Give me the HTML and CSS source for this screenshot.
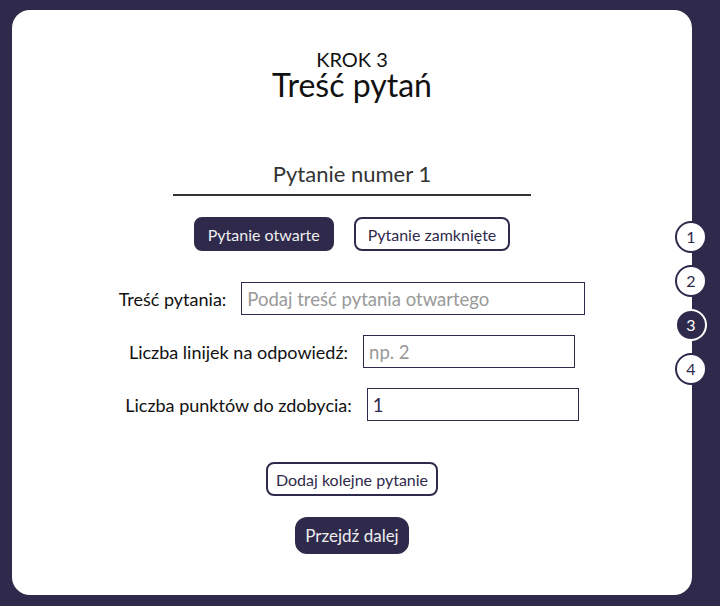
FILE: index.html
```html
<!DOCTYPE html>
<html lang="pl">
<head>
    <meta charset="UTF-8">
    <meta name="viewport" content="width=device-width, initial-scale=1.0">
    <title>Krok 3 - Treść pytań</title>
    <link rel="stylesheet" href="styles.css">
</head>
<body>
    <div class="card">
        <div class="card-header">
            <p class="step-label">KROK 3</p>
            <h1 class="title">Treść pytań</h1>
        </div>

        <input class="question-name" type="text" value="Pytanie numer 1">

        <div class="type-buttons">
            <button class="btn btn-filled">Pytanie otwarte</button>
            <button class="btn btn-outline">Pytanie zamknięte</button>
        </div>

        <div class="form">
            <div class="form-row">
                <label for="content">Treść pytania:</label>
                <input class="field field-wide" id="content" type="text" placeholder="Podaj treść pytania otwartego">
            </div>
            <div class="form-row">
                <label for="lines">Liczba linijek na odpowiedź:</label>
                <input class="field" id="lines" type="text" placeholder="np. 2">
            </div>
            <div class="form-row">
                <label for="points">Liczba punktów do zdobycia:</label>
                <input class="field" id="points" type="text" value="1">
            </div>
        </div>

        <button class="btn btn-outline btn-add">Dodaj kolejne pytanie</button>
        <button class="btn btn-filled btn-next">Przejdź dalej</button>
    </div>

    <!-- kroki kreatora -->
    <div class="steps">
        <span class="step">1</span>
        <span class="step">2</span>
        <span class="step step-active">3</span>
        <span class="step">4</span>
    </div>
</body>
</html>
```

FILE: styles.css
```css
/* Kreator testu - krok 3 */
body {
    font-family: "Lato", "Noto Sans", sans-serif;
    background-color: #2f2a4b;
    margin: 0;
    padding: 10px 0 11px 12px;
    display: flex;
    min-height: 100vh;
    box-sizing: border-box;
}

.card {
    background-color: #fff;
    width: 680px;
    height: 585px;
    border-radius: 18px;
    padding-top: 39px;
    box-sizing: border-box;
    display: flex;
    flex-direction: column;
    align-items: center;
}

.card-header {
    text-align: center;
    color: #111;
}

.step-label {
    margin: 0;
    font-size: 20px;
    line-height: 20px;
}

.title {
    margin: 0;
    font-size: 32px;
    line-height: 31px;
    font-weight: normal;
}

.question-name {
    margin-top: 60px;
    width: 358px;
    height: 36px;
    box-sizing: border-box;
    padding: 0 0 8px;
    border: none;
    border-bottom: 2px solid #333;
    font-family: inherit;
    font-size: 22px;
    color: #333;
    text-align: center;
    outline: none;
}

.type-buttons {
    display: flex;
    gap: 20px;
    margin-top: 21px;
}

.btn {
    font-family: inherit;
    font-size: 16px;
    height: 34px;
    padding: 0 12px;
    border: 2px solid #2f2a4b;
    border-radius: 8px;
    cursor: pointer;
    box-sizing: border-box;
}

.btn-filled {
    background-color: #2f2a4b;
    color: #eee;
}

.btn-outline {
    background-color: #fff;
    color: #2f2a4b;
}

.form {
    margin-top: 31px;
    display: flex;
    flex-direction: column;
    align-items: center;
    gap: 20px;
}

.form-row {
    display: flex;
    align-items: center;
    gap: 15px;
}

.form-row label {
    font-size: 18px;
    color: #111;
}

.field {
    width: 212px;
    height: 33px;
    box-sizing: border-box;
    padding: 0 5px;
    border: 1px solid #2f2a4b;
    font-family: inherit;
    font-size: 18.5px;
    color: #2f2a4b;
    outline: none;
}

.field::placeholder {
    color: #999;
}

.field-wide {
    width: 344px;
}

.btn-add {
    margin-top: 41px;
    padding: 0 8px;
}

.btn-next {
    margin-top: 21px;
    height: 37px;
    font-size: 17px;
    border-radius: 12px;
    padding: 0 8px;
}

.steps {
    align-self: center;
    margin-left: -17px;
    display: flex;
    flex-direction: column;
    gap: 12px;
    z-index: 1;
}

.step {
    width: 32px;
    height: 32px;
    box-sizing: border-box;
    border: 2px solid #2f2a4b;
    border-radius: 50%;
    background-color: #fff;
    color: #2f2a4b;
    font-size: 16px;
    display: flex;
    align-items: center;
    justify-content: center;
}

.step-active {
    background-color: #2f2a4b;
    border-color: #fff;
    color: #fff;
}
```
